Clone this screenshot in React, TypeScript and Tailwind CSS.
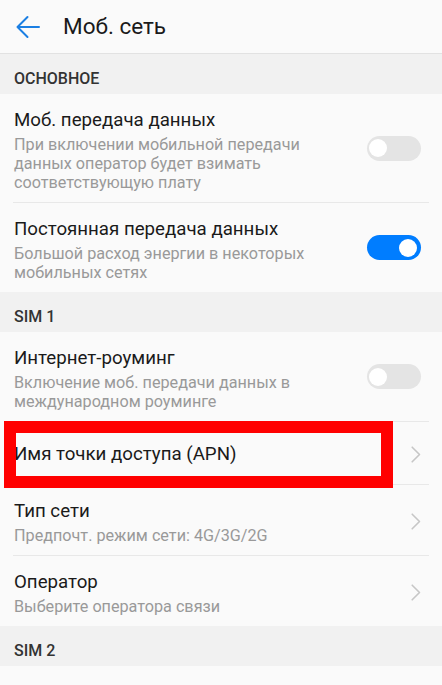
type Row = {
    title: string;
    subtitle?: string[];
    toggle?: boolean;
    on?: boolean;
    highlight?: boolean;
};

const groups: { label: string; rows: Row[] }[] = [
    {
        label: "ОСНОВНОЕ",
        rows: [
            {
                title: "Моб. передача данных",
                subtitle: ["При включении мобильной передачи", "данных оператор будет взимать", "соответствующую плату"],
                toggle: true,
                on: false,
            },
            {
                title: "Постоянная передача данных",
                subtitle: ["Большой расход энергии в некоторых", "мобильных сетях"],
                toggle: true,
                on: true,
            },
        ],
    },
    {
        label: "SIM 1",
        rows: [
            {
                title: "Интернет-роуминг",
                subtitle: ["Включение моб. передачи данных в", "международном роуминге"],
                toggle: true,
                on: false,
            },
            { title: "Имя точки доступа (APN)", highlight: true },
            { title: "Тип сети", subtitle: ["Предпочт. режим сети: 4G/3G/2G"] },
            { title: "Оператор", subtitle: ["Выберите оператора связи"] },
        ],
    },
    { label: "SIM 2", rows: [] },
];

const Toggle = ({ on }: { on?: boolean }) => (
    <div className={`relative w-[54px] h-[25px] rounded-full ${on ? "bg-[#007dff]" : "bg-[#e4e4e4]"}`}>
        <span
            className={`absolute top-[3.5px] w-[18px] h-[18px] rounded-full bg-white ${on ? "right-[4px]" : "left-[2px]"}`}
        ></span>
    </div>
);

const Chevron = () => (
    <svg width="10" height="17" viewBox="0 0 10 17" fill="none">
        <path d="M1.2 1.2L8.5 8.5L1.2 15.8" stroke="#c6c6c6" strokeWidth="1.6" strokeLinecap="round" strokeLinejoin="round" />
    </svg>
);

const SettingRow = ({ row, last }: { row: Row; last: boolean }) => (
    <div className={`relative mx-[13px] flex items-center justify-between ${last ? "" : "border-b border-[#e8e8e8]"}`}>
        <div className={row.subtitle ? "pt-[14px] pb-[10px] pl-px" : "pt-[20px] pb-[18px] pl-px"}>
            <div className="text-[18.7px] leading-[24px] text-[#1a1a1a]">{row.title}</div>
            {row.subtitle && (
                <div className="mt-[3px] text-[16.2px] leading-[19px] text-[#999999]">
                    {row.subtitle.map((line) => (
                        <div key={line}>{line}</div>
                    ))}
                </div>
            )}
        </div>
        <div className={row.toggle ? "mr-[8px]" : "mr-[8px] mt-[2px]"}>
            {row.toggle ? <Toggle on={row.on} /> : <Chevron />}
        </div>
        {row.highlight && (
            <div className="absolute -left-[9px] -top-[1px] w-[389px] h-[67px] border-[12px] border-[#ff0000]"></div>
        )}
    </div>
);

export default function App() {
    return (
        <div className="w-[442px] h-[685px] overflow-hidden bg-[#fafafa] font-['Roboto',sans-serif]">
            <header className="h-[54px] flex items-center border-b border-[#e2e2e2]">
                <svg width="26" height="24" viewBox="0 0 26 24" className="ml-[15px] mt-px" fill="none">
                    <path d="M24 12H2.5M12.5 2L2.5 12l10 10" stroke="#1b7fe3" strokeWidth="2" strokeLinecap="round" strokeLinejoin="round" />
                </svg>
                <h1 className="ml-[22px] text-[22.5px] text-[#1a1a1a]">Моб. сеть</h1>
            </header>
            {groups.map((g) => (
                <section key={g.label}>
                    <div className="h-[40px] bg-[#f1f1f1] flex items-end pb-[5px] px-[14px]">
                        <span className="text-[16px] leading-[20px] font-medium text-[#333333]">{g.label}</span>
                    </div>
                    {g.rows.map((row, i) => (
                        <SettingRow key={row.title} row={row} last={i === g.rows.length - 1} />
                    ))}
                </section>
            ))}
        </div>
    );
}
